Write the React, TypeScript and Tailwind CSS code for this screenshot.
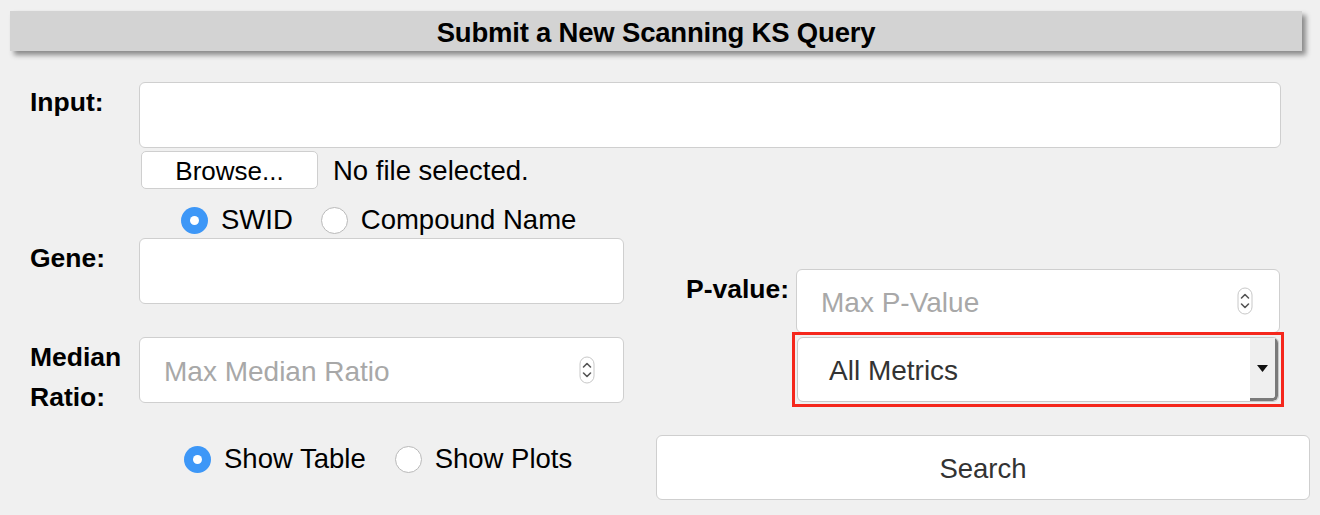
import React from "react";

const font = { fontFamily: '"Liberation Sans", Arial, Helvetica, sans-serif' };

function Spinner() {
  return (
    <svg width="16" height="28" viewBox="0 0 16 28" className="shrink-0">
      <rect x="1" y="1" width="14" height="26" rx="7" fill="#fff" stroke="#c8c8c8" strokeWidth="1" />
      <path d="M4.5 11 L8 7.5 L11.5 11" fill="none" stroke="#555" strokeWidth="1.6" strokeLinecap="round" strokeLinejoin="round" />
      <path d="M4.5 17 L8 20.5 L11.5 17" fill="none" stroke="#555" strokeWidth="1.6" strokeLinecap="round" strokeLinejoin="round" />
    </svg>
  );
}

function Radio({ checked }: { checked: boolean }) {
  return checked ? (
    <div className="w-[27px] h-[27px] rounded-full bg-[#3d97f7] flex items-center justify-center shrink-0">
      <div className="w-[9px] h-[9px] rounded-full bg-white" />
    </div>
  ) : (
    <div className="w-[27px] h-[27px] rounded-full bg-white border border-[#b9b9b9] shrink-0" />
  );
}

export default function App() {
  return (
    <div className="w-[1320px] h-[515px] bg-[#f0f0f0] overflow-hidden text-black" style={font}>
      <div className="pt-[11px] pl-[10px]">
        <div className="w-[1292px] h-[40px] pt-[3px] bg-[#d3d3d3] shadow-[4px_4px_5px_#8a8a8a] flex items-center justify-center">
          <span className="text-[27.5px] font-bold leading-none tracking-[-0.2px]">Submit a New Scanning KS Query</span>
        </div>
      </div>

      <div className="pl-[30px] pr-[10px] mt-[31px]">
        {/* Input row */}
        <div className="flex items-start pr-[29px]">
          <div className="w-[109px] text-[26.5px] font-bold leading-[40px]">Input:</div>
          <div className="flex-1 h-[66px] bg-white border border-[#cfcfcf] rounded-[6px]" />
        </div>
        <div className="flex items-center ml-[111px] mt-[3px]">
          <div className="w-[177px] h-[38px] pt-[2px] bg-white border border-[#cfcfcf] rounded-[5px] flex items-center justify-center text-[26px] leading-none">
            Browse...
          </div>
          <span className="ml-[15px] pt-[2px] text-[27.5px] leading-none">No file selected.</span>
        </div>
        <div className="flex items-center h-[32px] mt-[15px] ml-[151px]">
          <Radio checked />
          <span className="ml-[13px] text-[27.5px] leading-none">SWID</span>
          <div className="ml-[28px]"><Radio checked={false} /></div>
          <span className="ml-[13px] text-[27.5px] leading-none">Compound Name</span>
        </div>

        {/* two columns */}
        <div className="flex mt-[2px]">
          <div className="w-[594px] flex flex-col">
            <div className="flex items-start">
              <div className="w-[109px] text-[26.5px] font-bold leading-[40px]">Gene:</div>
              <div className="w-[485px] h-[66px] bg-white border border-[#cfcfcf] rounded-[6px]" />
            </div>
            <div className="flex items-start mt-[33px]">
              <div className="w-[109px] text-[26.5px] font-bold leading-[40px]">Median<br />Ratio:</div>
              <div className="w-[485px] h-[66px] bg-white border border-[#cfcfcf] rounded-[6px] flex items-center pl-[24px] pr-[28px]">
                <span className="flex-1 pt-[3px] text-[28px] text-[#a8a8a8] leading-none">Max Median Ratio</span>
                <Spinner />
              </div>
            </div>
            <div className="flex items-center h-[32px] mt-[26px] ml-[154px]">
              <Radio checked />
              <span className="ml-[13px] text-[27.5px] leading-none">Show Table</span>
              <div className="ml-[29px]"><Radio checked={false} /></div>
              <span className="ml-[13px] text-[27.5px] leading-none">Show Plots</span>
            </div>
          </div>

          <div className="ml-[32px] w-[654px] flex flex-col">
            <div className="flex items-start mt-[31px] ml-[30px]">
              <div className="w-[110px] text-[26.5px] font-bold leading-[40px]">P-value:</div>
              <div className="w-[484px] h-[64px] bg-white border border-[#cfcfcf] rounded-[6px] flex items-center pl-[24px] pr-[26px]">
                <span className="flex-1 pt-[3px] text-[28px] text-[#a8a8a8] leading-none">Max P-Value</span>
                <Spinner />
              </div>
            </div>
            <div className="ml-[136px] -mt-[1px] w-[492px] p-[2px] border-[3px] border-[#f5271c]">
              <div className="w-full h-[65px] bg-white border border-[#c9c9c9] rounded-[6px] flex overflow-hidden">
                <div className="flex-1 flex items-center pl-[31px] pt-[3px] text-[28px] text-[#333] leading-none">All Metrics</div>
                <div className="w-[28px] h-full bg-[#efefef] border-r-[3px] border-b-[3px] border-[#7a7a7a] rounded-br-[5px] flex items-center justify-center">
                  <svg width="11" height="7" viewBox="0 0 11 7"><path d="M0 0 H11 L5.5 7 Z" fill="#111" /></svg>
                </div>
              </div>
            </div>
            <div className="mt-[28px] w-[654px] h-[65px] pt-[3px] bg-white border border-[#cfcfcf] rounded-[6px] flex items-center justify-center text-[27.5px] text-[#333] leading-none">
              Search
            </div>
          </div>
        </div>
      </div>
    </div>
  );
}
